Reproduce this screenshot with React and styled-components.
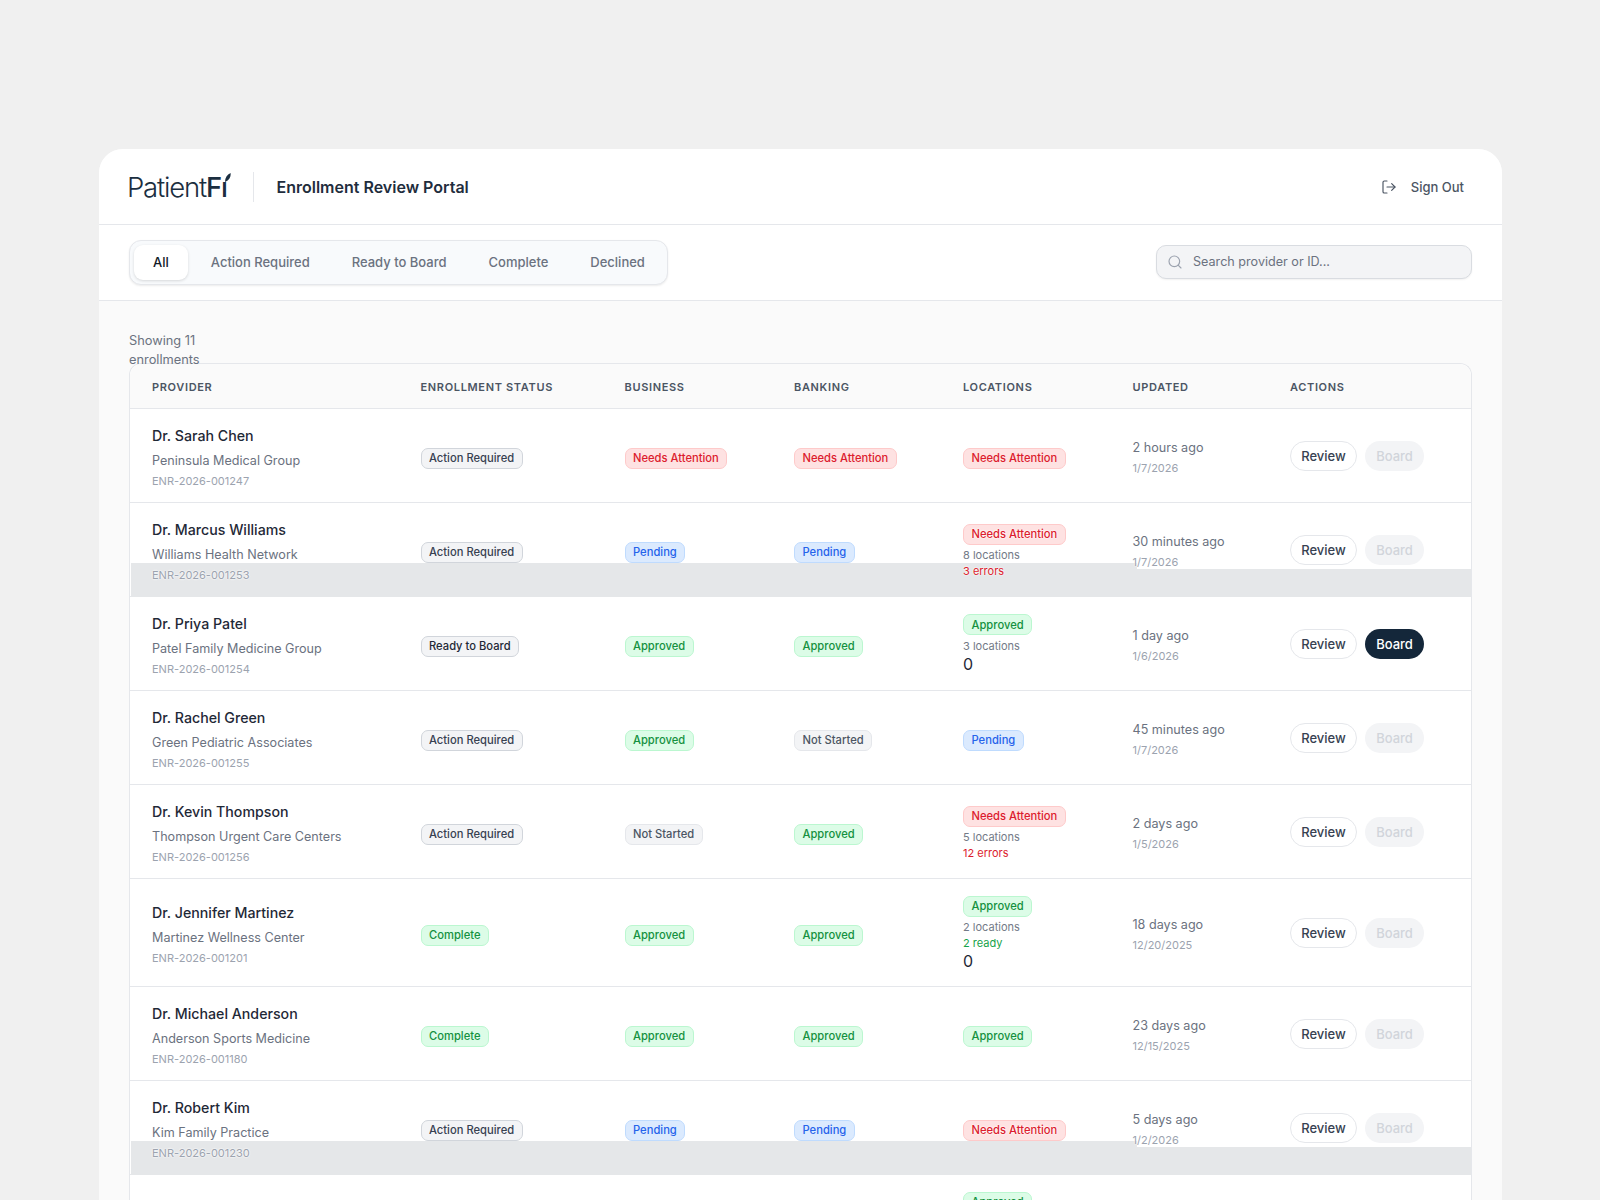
import React from "react";
import styled, { createGlobalStyle } from "styled-components";
import { LogOut, Search } from "lucide-react";

const GlobalStyle = createGlobalStyle`
  * { box-sizing: border-box; }
  html, body { margin: 0; height: 1200px; overflow: hidden; }
  body {
    background: #f0f0f0;
    font-family: Inter, "Liberation Sans", sans-serif;
    -webkit-font-smoothing: antialiased;
  }
`;

const Page = styled.div`
  padding-top: 149px;
`;

const Card = styled.div`
  width: 1403px;
  margin-left: 99px;
  background: #fafafa;
  border-radius: 24px 24px 0 0;
  overflow: hidden;
`;

const Header = styled.header`
  height: 76px;
  padding: 0 38px 0 30px;
  background: #fff;
  border-bottom: 1px solid #e5e7eb;
  display: flex;
  align-items: center;
  justify-content: space-between;
`;

const Brand = styled.div`
  display: flex;
  align-items: center;
`;

const Logo = styled.div`
  position: relative;
  width: 126px;
  margin-left: -2px;
  font-size: 27.5px;
  line-height: 30px;
  letter-spacing: -1.2px;
  font-weight: 300;
  color: #1b2e40;
  white-space: nowrap;
  b { font-weight: 500; }
`;

const Leaf = styled.svg`
  position: absolute;
  left: 97px;
  top: 1px;
  width: 7px;
  height: 9px;
`;

const Divider = styled.span`
  width: 1px;
  height: 30px;
  background: #e5e7eb;
  margin-right: 22.5px;
`;

const Title = styled.h1`
  margin: 0;
  font-size: 16px;
  line-height: 24px;
  font-weight: 600;
  color: #1f2d3d;
`;

const SignOut = styled.button`
  display: flex;
  align-items: center;
  gap: 14px;
  padding: 0;
  border: 0;
  background: none;
  font: 500 13px/20px Inter, sans-serif;
  color: #4b5563;
`;

const Toolbar = styled.div`
  height: 75.5px;
  padding: 0 30px;
  background: #fff;
  border-bottom: 1px solid #e5e7eb;
  display: flex;
  align-items: center;
  justify-content: space-between;
`;

const Tabs = styled.div`
  display: flex;
  gap: 4px;
  padding: 4px 3px 4px 4px;
  background: #f8fafc;
  border: 1px solid #e5e7eb;
  border-radius: 12px;
  box-shadow: 0 1px 2px rgba(0, 0, 0, 0.08);
`;

const Tab = styled.button`
  height: 35px;
  padding: 0 19px;
  border: 0;
  border-radius: 9px;
  font: 500 13px/20px Inter, sans-serif;
  color: ${(p) => (p.$active ? "#111827" : "#6b7280")};
  background: ${(p) => (p.$active ? "#fff" : "transparent")};
  box-shadow: ${(p) => (p.$active ? "0 1px 3px rgba(0,0,0,.14)" : "none")};
`;

const SearchBox = styled.label`
  width: 316px;
  height: 34px;
  padding: 0 10px;
  display: flex;
  align-items: center;
  gap: 10px;
  color: #9ca3af;
  background: #f3f4f6;
  border: 1px solid #d9dce1;
  border-radius: 10px;
  box-shadow: 0 1px 2px rgba(0, 0, 0, 0.06);
`;

const SearchInput = styled.input`
  flex: 1;
  min-width: 0;
  padding: 0;
  border: 0;
  outline: 0;
  background: transparent;
  font: 400 12.6px/20px Inter, sans-serif;
  &::placeholder { color: #6b7280; opacity: 1; }
`;

const Content = styled.main`
  padding: 30px 30px 0;
`;

/* the two lines run a little past the box and over the table's top edge */
const Summary = styled.div`
  position: relative;
  z-index: 1;
  width: 100px;
  height: 32.5px;
  font-size: 12.8px;
  line-height: 19px;
  color: #6b7280;
`;

const Table = styled.div`
  position: relative;
  background: #fff;
  border: 1px solid #e5e7eb;
  border-bottom: 0;
  border-radius: 12px 12px 0 0;
`;

const Cols = styled.div`
  display: grid;
  grid-template-columns: 268.5px 204px 169.5px 169px 169.5px 157.5px 1fr;
  align-items: center;
`;

const HeadRow = styled(Cols)`
  height: 45px;
  padding-top: 2px;
  background: #fafafa;
  border-bottom: 1px solid #e5e7eb;
  border-radius: 12px 12px 0 0;
`;

const Th = styled.div`
  padding-left: 22px;
  font-size: 11px;
  line-height: 16px;
  font-weight: 600;
  letter-spacing: 0.66px;
  text-transform: uppercase;
  color: #4b5563;
`;

const Row = styled(Cols)`
  position: relative;
  min-height: 94px;
  border-bottom: 1px solid #e5e7eb;
`;

/* grey strip sitting behind the last lines of a row */
const Band = styled.div`
  position: absolute;
  left: 1px;
  right: 0;
  top: 60px;
  bottom: -1px;
  background: #e5e7e9;
  clip-path: polygon(0 0, 1006px 0, 1006px 6px, 100% 6px, 100% 100%, 0 100%);
`;

const Cell = styled.div`
  position: relative;
  padding-left: 22px;
  text-shadow: ${(p) => (p.$banded ? "0 0 2px #fff, 0 0 2px #fff" : "none")};
`;

const ProviderBlock = styled.div`
  padding-top: 2px;
`;

const Name = styled.div`
  font-size: 14.2px;
  line-height: 24px;
  font-weight: 500;
  color: #1f2937;
`;

const Org = styled.div`
  margin-top: 3px;
  font-size: 12.6px;
  line-height: 20px;
  color: #6b7280;
`;

const EnrId = styled.div`
  margin-top: 2px;
  font-size: 11px;
  line-height: 16px;
  color: #9ca3af;
`;

const tones = {
  action: ["#f3f4f6", "#d1d5db", "#374151"],
  ready: ["#f3f4f6", "#d1d5db", "#1f2937"],
  red: ["#fee2e2", "#fecaca", "#dc1c2e"],
  blue: ["#dbeafe", "#bfdbfe", "#2563eb"],
  green: ["#dcfce7", "#bbf7d0", "#15913f"],
  grey: ["#f3f4f6", "#e5e7eb", "#4b5563"],
};

const Badge = styled.span`
  display: inline-flex;
  align-items: center;
  height: 21px;
  padding: 0 7.5px;
  font-size: 11.2px;
  line-height: 16px;
  font-weight: 500;
  white-space: nowrap;
  border-radius: 7px;
  background: ${(p) => tones[p.$tone][0]};
  border: 1px solid ${(p) => tones[p.$tone][1]};
  color: ${(p) => tones[p.$tone][2]};
`;

const BadgeOnly = styled.div`
  display: flex;
  padding-top: 5px;
`;

const LocationBlock = styled.div`
  padding: 13px 0;
`;

const BadgeLine = styled.div`
  height: 28px;
  display: flex;
  align-items: center;
`;

const SubLine = styled.div`
  font-size: 11px;
  line-height: 15.5px;
  color: ${(p) => p.$color || "#737a87"};
`;

const Zero = styled.div`
  font-size: 16px;
  line-height: 20px;
  margin-bottom: 2px;
  color: #1f2937;
`;

const TimeBlock = styled.div`
  padding-top: 3px;
`;

const Ago = styled.div`
  font-size: 12.6px;
  line-height: 20px;
  color: #6b7280;
`;

const DateText = styled.div`
  margin-top: 2.5px;
  font-size: 11px;
  line-height: 16px;
  color: #9ca3af;
`;

const Actions = styled.div`
  display: flex;
  gap: 8px;
`;

const ReviewButton = styled.button`
  width: 67px;
  height: 30px;
  padding: 0;
  background: #fff;
  border: 1px solid #e5e7eb;
  border-radius: 15px;
  font: 500 13px/20px Inter, sans-serif;
  color: #374151;
`;

const BoardButton = styled.button`
  width: 59px;
  height: 30px;
  padding: 0;
  border: 0;
  border-radius: 15px;
  font: 500 13px/20px Inter, sans-serif;
  background: ${(p) => (p.disabled ? "#f3f4f6" : "#14273a")};
  color: ${(p) => (p.disabled ? "#d1d5db" : "#fff")};
`;

const columns = ["Provider", "Enrollment Status", "Business", "Banking", "Locations", "Updated", "Actions"];
const tabs = ["All", "Action Required", "Ready to Board", "Complete", "Declined"];

const toneOf = {
  "Action Required": "action",
  "Ready to Board": "ready",
  "Needs Attention": "red",
  Pending: "blue",
  Approved: "green",
  Complete: "green",
  "Not Started": "grey",
};

const rows = [
  { name: "Dr. Sarah Chen", org: "Peninsula Medical Group", id: "ENR-2026-001247", status: "Action Required", business: "Needs Attention", banking: "Needs Attention", loc: { badge: "Needs Attention" }, ago: "2 hours ago", date: "1/7/2026" },
  { name: "Dr. Marcus Williams", org: "Williams Health Network", id: "ENR-2026-001253", status: "Action Required", business: "Pending", banking: "Pending", loc: { badge: "Needs Attention", count: "8 locations", note: "3 errors", noteColor: "#dc1c2e" }, ago: "30 minutes ago", date: "1/7/2026", banded: true },
  { name: "Dr. Priya Patel", org: "Patel Family Medicine Group", id: "ENR-2026-001254", status: "Ready to Board", business: "Approved", banking: "Approved", loc: { badge: "Approved", count: "3 locations", zero: true }, ago: "1 day ago", date: "1/6/2026", canBoard: true },
  { name: "Dr. Rachel Green", org: "Green Pediatric Associates", id: "ENR-2026-001255", status: "Action Required", business: "Approved", banking: "Not Started", loc: { badge: "Pending" }, ago: "45 minutes ago", date: "1/7/2026" },
  { name: "Dr. Kevin Thompson", org: "Thompson Urgent Care Centers", id: "ENR-2026-001256", status: "Action Required", business: "Not Started", banking: "Approved", loc: { badge: "Needs Attention", count: "5 locations", note: "12 errors", noteColor: "#dc1c2e" }, ago: "2 days ago", date: "1/5/2026" },
  { name: "Dr. Jennifer Martinez", org: "Martinez Wellness Center", id: "ENR-2026-001201", status: "Complete", business: "Approved", banking: "Approved", loc: { badge: "Approved", count: "2 locations", note: "2 ready", noteColor: "#16a34a", zero: true }, ago: "18 days ago", date: "12/20/2025" },
  { name: "Dr. Michael Anderson", org: "Anderson Sports Medicine", id: "ENR-2026-001180", status: "Complete", business: "Approved", banking: "Approved", loc: { badge: "Approved" }, ago: "23 days ago", date: "12/15/2025" },
  { name: "Dr. Robert Kim", org: "Kim Family Practice", id: "ENR-2026-001230", status: "Action Required", business: "Pending", banking: "Pending", loc: { badge: "Needs Attention" }, ago: "5 days ago", date: "1/2/2026", banded: true },
];

const StatusBadge = ({ label }) => <Badge $tone={toneOf[label]}>{label}</Badge>;

const LocationCell = ({ loc }) => {
  if (!loc.count) {
    return (
      <BadgeOnly>
        <StatusBadge label={loc.badge} />
      </BadgeOnly>
    );
  }
  return (
    <LocationBlock>
      <BadgeLine>
        <StatusBadge label={loc.badge} />
      </BadgeLine>
      <SubLine>{loc.count}</SubLine>
      {loc.note && <SubLine $color={loc.noteColor}>{loc.note}</SubLine>}
      {loc.zero && <Zero>0</Zero>}
    </LocationBlock>
  );
};

const App = () => (
  <Page>
    <GlobalStyle />
    <Card>
      <Header>
        <Brand>
          <Logo>
            Patient<b>Fı</b>
            <Leaf viewBox="0 0 7 9">
              <path d="M1 9C1 4.5 3 1.5 6.6 0 7 4 5 7.5 1 9Z" fill="#1b2e40" />
            </Leaf>
          </Logo>
          <Divider />
          <Title>Enrollment Review Portal</Title>
        </Brand>
        <SignOut>
          <LogOut size={16} strokeWidth={1.75} />
          Sign Out
        </SignOut>
      </Header>
      <Toolbar>
        <Tabs>
          {tabs.map((tab, i) => (
            <Tab key={tab} $active={i === 0}>
              {tab}
            </Tab>
          ))}
        </Tabs>
        <SearchBox>
          <Search size={16} strokeWidth={1.75} />
          <SearchInput placeholder="Search provider or ID..." />
        </SearchBox>
      </Toolbar>
      <Content>
        <Summary>Showing 11 enrollments</Summary>
        <Table>
          <HeadRow>
            {columns.map((col) => (
              <Th key={col}>{col}</Th>
            ))}
          </HeadRow>
          {rows.map((row) => (
            <Row key={row.id}>
              {row.banded && <Band />}
              <Cell $banded={row.banded}>
                <ProviderBlock>
                  <Name>{row.name}</Name>
                  <Org>{row.org}</Org>
                  <EnrId>{row.id}</EnrId>
                </ProviderBlock>
              </Cell>
              <Cell>
                <BadgeOnly>
                  <StatusBadge label={row.status} />
                </BadgeOnly>
              </Cell>
              <Cell>
                <BadgeOnly>
                  <StatusBadge label={row.business} />
                </BadgeOnly>
              </Cell>
              <Cell>
                <BadgeOnly>
                  <StatusBadge label={row.banking} />
                </BadgeOnly>
              </Cell>
              <Cell $banded={row.banded}>
                <LocationCell loc={row.loc} />
              </Cell>
              <Cell $banded={row.banded}>
                <TimeBlock>
                  <Ago>{row.ago}</Ago>
                  <DateText>{row.date}</DateText>
                </TimeBlock>
              </Cell>
              <Cell>
                <Actions>
                  <ReviewButton>Review</ReviewButton>
                  <BoardButton disabled={!row.canBoard}>Board</BoardButton>
                </Actions>
              </Cell>
            </Row>
          ))}
          {/* next row is cut off by the bottom of the window, only its badge shows */}
          <Row>
            <span />
            <span />
            <span />
            <span />
            <Cell>
              <LocationCell loc={{ badge: "Approved", count: "2 locations", note: "2 ready", noteColor: "#16a34a", zero: true }} />
            </Cell>
          </Row>
        </Table>
      </Content>
    </Card>
  </Page>
);

export default App;
